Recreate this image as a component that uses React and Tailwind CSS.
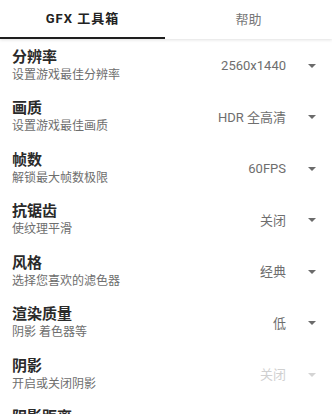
import React from 'react';

const rows = [
    { title: '分辨率', desc: '设置游戏最佳分辨率', value: '2560x1440' },
    { title: '画质', desc: '设置游戏最佳画质', value: 'HDR 全高清' },
    { title: '帧数', desc: '解锁最大帧数极限', value: '60FPS' },
    { title: '抗锯齿', desc: '使纹理平滑', value: '关闭' },
    { title: '风格', desc: '选择您喜欢的滤色器', value: '经典' },
    { title: '渲染质量', desc: '阴影 着色器等', value: '低' },
    { title: '阴影', desc: '开启或关闭阴影', value: '关闭', disabled: true },
    { title: '阴影距离', desc: '设置阴影距离', value: '关闭', disabled: true },
];

const Arrow = ({ disabled }) => (
    <svg width="8" height="4" viewBox="0 0 8 4" className="block">
        <path d="M0 0 L8 0 L4 4 Z" fill={disabled ? '#d4d4d4' : '#6b6b6b'} />
    </svg>
);

const App = () => {
    return (
        <div
            className="w-[332px] h-[414px] overflow-hidden bg-white"
            style={{ fontFamily: 'Roboto, "Noto Sans CJK SC", sans-serif' }}
        >
            <div className="flex h-[39px] shadow-[0_1px_3px_rgba(0,0,0,0.12)] relative z-10 bg-white">
                <div className="w-[165px] flex items-center justify-center border-b-2 border-[#1e1e1e] text-[13px] font-bold tracking-[1px] text-[#222]">
                    GFX 工具箱
                </div>
                <div className="flex-1 flex items-center justify-center text-[13px] text-[#777]">
                    帮助
                </div>
            </div>
            <div className="flex flex-col pt-[1px]">
                {rows.map((r) => (
                    <div key={r.title} className="h-[51.5px] shrink-0 flex items-center pl-3 pr-4">
                        <div className="flex-1 flex flex-col">
                            <div className="text-[15px] leading-[19px] font-bold text-[#2a2a2a]">{r.title}</div>
                            <div className="text-[12px] leading-[17px] text-[#6e6e6e]">{r.desc}</div>
                        </div>
                        <div className={`text-[13px] ${r.disabled ? 'text-[#d0d0d0]' : 'text-[#6e6e6e]'}`}>
                            {r.value}
                        </div>
                        <div className="w-[30px] flex justify-end">
                            <Arrow disabled={r.disabled} />
                        </div>
                    </div>
                ))}
            </div>
        </div>
    );
};

export default App;
